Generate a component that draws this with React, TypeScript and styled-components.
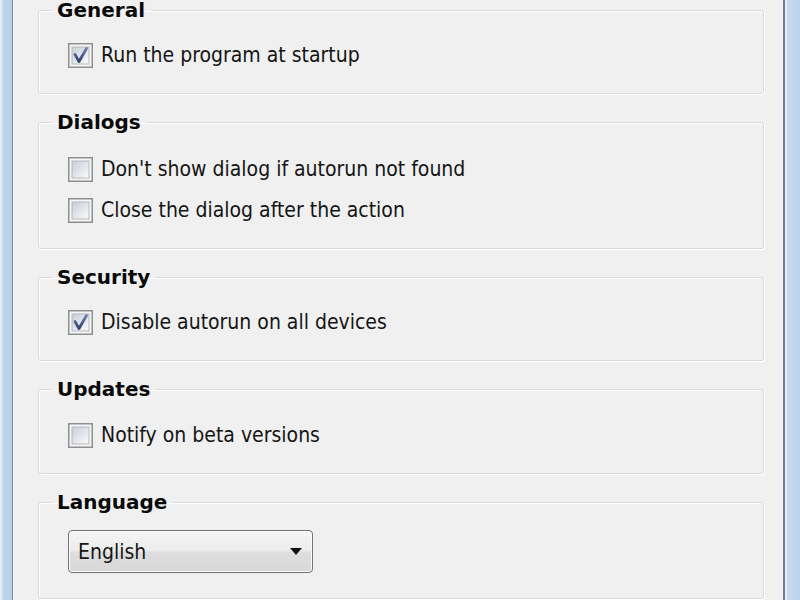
import styled, { createGlobalStyle } from "styled-components";

const GlobalStyle = createGlobalStyle`
  html, body {
    margin: 0;
    padding: 0;
    background: #f0f0f0;
    overflow: hidden;
  }
`;

const Window = styled.div`
  width: 800px;
  height: 600px;
  display: flex;
  overflow: hidden;
  background: #f0f0f0;
`;

const LeftFrame = styled.div`
  width: 15px;
  flex-shrink: 0;
  background:
    linear-gradient(to right,
      #eef3fa 0, #eef3fa 1px,
      #d3e1f2 1px, #d3e1f2 3px,
      #bfd3eb 3px, #b9cfea 12px,
      #76849a 12px, #76849a 13px,
      #fbfbfb 13px, #fbfbfb 14px,
      #f0f0f0 14px);
`;

const RightFrame = styled.div`
  width: 17px;
  flex-shrink: 0;
  background:
    linear-gradient(to right,
      #707c8c 0, #707c8c 2px,
      #e4edf7 2px, #e4edf7 4px,
      #c6d9ef 4px, #bcd2ec 17px);
`;

const Content = styled.div`
  flex: 1;
  display: flex;
  flex-direction: column;
  gap: 18px;
  padding: 0 19px 0 23px;
  font-family: "DejaVu Sans Condensed", "DejaVu Sans", sans-serif;
  font-size: 21px;
  color: #151515;
`;

const Group = styled.fieldset<{ $top?: number }>`
  margin: 0;
  min-width: 0;
  padding: ${p => p.$top ?? 15}px 20px 17px 29px;
  border: 1px solid #d5dbe0;
  border-radius: 3px;
  box-shadow: inset 1px 1px 0 #ffffff, 1px 1px 0 #ffffff;
  display: flex;
  flex-direction: column;
`;

const Legend = styled.legend`
  margin-left: -17px;
  padding: 0 6px;
  font-family: "DejaVu Sans", sans-serif;
  font-weight: bold;
  font-size: 20px;
  line-height: 20px;
  color: #0a0a0a;
`;

const Row = styled.label`
  display: flex;
  align-items: center;
  gap: 8px;
  height: 41px;
  line-height: 1;
`;

const Box = styled.svg`
  width: 25px;
  height: 25px;
  flex-shrink: 0;
`;

const Check = ({ checked }: { checked: boolean }) => (
  <Box viewBox="0 0 25 25">
    <defs>
      <linearGradient id="cbfill" x1="0" y1="0" x2="1" y2="1">
        <stop offset="0" stopColor="#c9ced6" />
        <stop offset="1" stopColor="#fbfbfb" />
      </linearGradient>
      <linearGradient id="cbmark" x1="0" y1="0" x2="0" y2="1">
        <stop offset="0" stopColor="#6f7fb0" />
        <stop offset="1" stopColor="#33426e" />
      </linearGradient>
    </defs>
    <rect x="0.75" y="0.75" width="23.5" height="23.5" fill="#f6f6f6" stroke="#8e8f8f" strokeWidth="1.5" />
    <rect x="4" y="4" width="17" height="17" fill="url(#cbfill)" stroke="#b4b8be" strokeWidth="1" />
    {checked && (
      <path
        d="M7 11.5 L11 18.5 L18.5 5.5"
        fill="none"
        stroke="url(#cbmark)"
        strokeWidth="2.8"
        strokeLinejoin="round"
        strokeLinecap="round"
      />
    )}
  </Box>
);

const Select = styled.div`
  margin-top: 3px;
  width: 245px;
  height: 43px;
  box-sizing: border-box;
  border: 1.5px solid #737373;
  border-radius: 4px;
  background: linear-gradient(to bottom, #f5f5f5 0%, #ececec 48%, #dedede 52%, #d8d8d8 100%);
  box-shadow: inset 0 0 0 1px #fbfbfb;
  display: flex;
  align-items: center;
  justify-content: space-between;
  padding: 0 9px 0 9px;
`;

const Arrow = styled.span`
  width: 0;
  height: 0;
  border-left: 6px solid transparent;
  border-right: 6px solid transparent;
  border-top: 7px solid #111;
  margin-right: 1px;
`;

const LangGroup = styled(Group)`
  padding-bottom: 25px;
`;

type Item = { label: string; checked: boolean };
const groups: { title: string; top: number; items: Item[] }[] = [
  { title: "General", top: 15, items: [{ label: "Run the program at startup", checked: true }] },
  {
    title: "Dialogs",
    top: 17,
    items: [
      { label: "Don't show dialog if autorun not found", checked: false },
      { label: "Close the dialog after the action", checked: false },
    ],
  },
  { title: "Security", top: 15, items: [{ label: "Disable autorun on all devices", checked: true }] },
  { title: "Updates", top: 16, items: [{ label: "Notify on beta versions", checked: false }] },
];

export default function App() {
  return (
    <>
      <GlobalStyle />
      <Window>
        <LeftFrame />
        <Content>
          {groups.map(g => (
            <Group key={g.title} $top={g.top}>
              <Legend>{g.title}</Legend>
              {g.items.map(it => (
                <Row key={it.label}>
                  <Check checked={it.checked} />
                  {it.label}
                </Row>
              ))}
            </Group>
          ))}
          <LangGroup $top={15}>
            <Legend>Language</Legend>
            <Select>
              English
              <Arrow />
            </Select>
          </LangGroup>
        </Content>
        <RightFrame />
      </Window>
    </>
  );
}
